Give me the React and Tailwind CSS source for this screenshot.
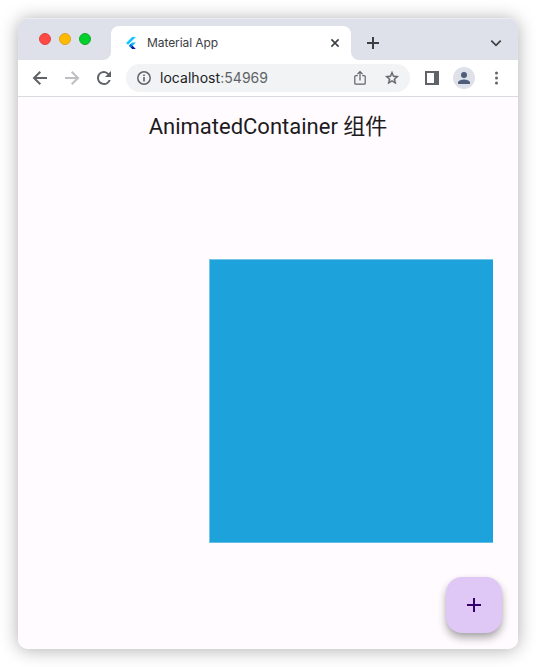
import React from "react";

function FlutterLogo() {
  return (
    <svg className="block h-[12px] w-[10px]" viewBox="0 0 256 317">
      <path fill="#13c2ff" d="M157.7.001.001 157.666l48.8 48.8L255.268.001z" />
      <path fill="#10b8fb" d="M156.567 145.397 72.15 229.815l49.132 49.857 48.897-48.897 85.418-85.378z" />
      <path fill="#001f98" d="m121.133 279.083 37.082 37.082h97.052l-85.047-85.348z" />
      <path fill="#0a6fd0" d="m71.6 230.364 48.801-48.801 49.92 49.254-49.188 49.188z" />
    </svg>
  );
}

function TabStrip() {
  return (
    <div className="flex h-[42px] items-end bg-[#dee1e9] shadow-[inset_0_1px_0_#e9ebf0]">
      <div className="flex h-[42px] w-[85px] items-center gap-2 pl-[21px]">
        <i className="size-3 rounded-full border border-[#e0443e] bg-[#ff4a43]" />
        <i className="size-3 rounded-full border border-[#dea123] bg-[#ffba00]" />
        <i className="size-3 rounded-full border border-[#14a92e] bg-[#00d02b]" />
      </div>
      <svg className="block size-2" viewBox="0 0 8 8"><path fill="#fff" d="M8 0v8H0a8 8 0 0 0 8-8z" /></svg>
      <div className="flex h-[34px] w-[240px] items-center rounded-t-lg bg-white pl-[15px] pr-[11px]">
        <FlutterLogo />
        <span className="ml-[11px] flex-1 whitespace-nowrap font-[Inter,'Noto_Sans',sans-serif] text-[12px] leading-4 tracking-[-0.08px] text-[#3c4043]">Material App</span>
        <svg className="size-[10px]" viewBox="0 0 10 10" fill="none" stroke="#3c4043" strokeWidth="1.6"><path d="m1.4 1.4 7.2 7.2M8.6 1.4 1.4 8.6" /></svg>
      </div>
      <svg className="block size-2" viewBox="0 0 8 8"><path fill="#fff" d="M0 0v8h8a8 8 0 0 1-8-8z" /></svg>
      <div className="flex h-[34px] flex-1 items-center justify-between pl-2 pr-4">
        <svg className="size-3" viewBox="0 0 12 12" fill="none" stroke="#3c4043" strokeWidth="2"><path d="M6 0v12M0 6h12" /></svg>
        <svg className="h-3 w-[12px]" viewBox="0 0 12 12" fill="none" stroke="#3c4043" strokeWidth="1.7"><path d="m1.3 3.6 4.7 4.7 4.7-4.7" /></svg>
      </div>
    </div>
  );
}

function Toolbar() {
  return (
    <div className="flex h-[37px] items-center border-b border-[#d9dbe0] bg-white pl-[14px] pr-[13px]">
      <svg className="size-4" viewBox="0 0 16 16" fill="none" stroke="#5f6368" strokeWidth="2"><path d="M15 8H2.5M8.3 1.7 2 8l6.3 6.3" /></svg>
      <svg className="ml-4 size-4" viewBox="0 0 16 16" fill="none" stroke="#bdbfc1" strokeWidth="2"><path d="M1 8h12.5M7.7 1.7 14 8l-6.3 6.3" /></svg>
      <svg className="ml-4 size-4" viewBox="0 0 16 16"><path fill="#5f6368" d="M12.7 3.3A6.96 6.96 0 0 0 8 1a7 7 0 1 0 6.7 9h-2.1A5 5 0 1 1 8 3c1.4 0 2.6.6 3.5 1.5L9 7h6V1z" /></svg>
      <div className="ml-[14px] flex h-7 w-[284px] items-center rounded-full bg-[#f1f3f4] pl-[11px] pr-[10px]">
        <svg className="size-[14px]" viewBox="0 0 14 14" fill="none" stroke="#5f6368"><circle cx="7" cy="7" r="6.2" strokeWidth="1.5" /><path d="M7 6v4.5M7 3.4v1.7" strokeWidth="1.6" /></svg>
        <span className="ml-[9px] flex-1 whitespace-nowrap font-[Inter,'Noto_Sans',sans-serif] text-[14px] leading-5 tracking-[0.04px] text-[#202124]">localhost<span className="text-[#5f6368]">:54969</span></span>
        <svg className="h-4 w-3" viewBox="0 0 12 16" fill="none" stroke="#5f6368" strokeWidth="1.2"><path d="M3.7 5.6H1.8a1 1 0 0 0-1 1v6.6a1 1 0 0 0 1 1h8.4a1 1 0 0 0 1-1V6.6a1 1 0 0 0-1-1H8.3M6 10.5V1.8M3.4 4.2 6 1.6l2.6 2.6" /></svg>
        <svg className="ml-[18px] size-4" viewBox="0 0 24 24"><path fill="#5f6368" d="m22 9.240-7.190-.62L12 2 9.190 8.630 2 9.240l5.460 4.730L5.820 21 12 17.270 18.180 21l-1.630-7.030zM12 15.400l-3.760 2.270 1-4.280-3.320-2.880 4.380-.38L12 6.100l1.710 4.040 4.380.38-3.320 2.880 1 4.280z" stroke="#5f6368" strokeWidth=".6" /></svg>
      </div>
      <svg className="ml-[15px] size-[14px]" viewBox="0 0 14 14"><path fill="#5f6368" fillRule="evenodd" d="M0 0h14v14H0zM2 2v10h7V2z" /></svg>
      <div className="ml-[14px] flex size-[22px] items-center justify-center rounded-full bg-[#dee1e9]">
        <svg className="size-3" viewBox="0 0 12 12" fill="#4e5d78"><circle cx="6" cy="3" r="3" /><path d="M0 12v-1.500c0-2 4-3 6-3s6 1 6 3V12z" /></svg>
      </div>
      <svg className="ml-auto h-[14px] w-[17px]" viewBox="0 0 17 14" fill="#5f6368"><circle cx="8.500" cy="2" r="1.500" /><circle cx="8.500" cy="7" r="1.500" /><circle cx="8.500" cy="12" r="1.500" /></svg>
    </div>
  );
}

function Page() {
  return (
    <main className="flex flex-1 flex-col bg-[#fffbff]">
      <h1 className="mt-[14px] h-8 whitespace-nowrap text-center font-[Roboto,'Noto_Sans_CJK_SC',sans-serif] text-[22px] leading-8 text-[#1d1b1e]">AnimatedContainer 组件</h1>
      <div className="ml-[191px] mt-[116px] size-[284px] border-l border-t border-[#79c5e8] bg-[#1ea2dc] shadow-[inset_0_-1px_0_#62bce5]" />
      <button aria-label="Add" className="mb-4 ml-auto mr-4 mt-auto flex size-14 items-center justify-center rounded-2xl bg-[#dfc8f5] shadow-[0_5px_8px_rgba(0,0,0,0.32),0_1px_3px_rgba(0,0,0,0.06)]">
        <svg className="size-6" viewBox="0 0 24 24" fill="#35006b"><path d="M19 13h-6v6h-2v-6H5v-2h6V5h2v6h6z" /></svg>
      </button>
    </main>
  );
}

export default function App() {
  return (
    <div className="h-[667px] w-[536px] overflow-hidden bg-white p-[18px]">
      <div className="flex h-[631px] w-[500px] flex-col rounded-[10px] shadow-[0_1px_18px_rgba(0,0,0,0.32)]">
        <div className="flex flex-1 flex-col overflow-hidden rounded-[10px]">
          <TabStrip />
          <Toolbar />
          <Page />
        </div>
      </div>
    </div>
  );
}
